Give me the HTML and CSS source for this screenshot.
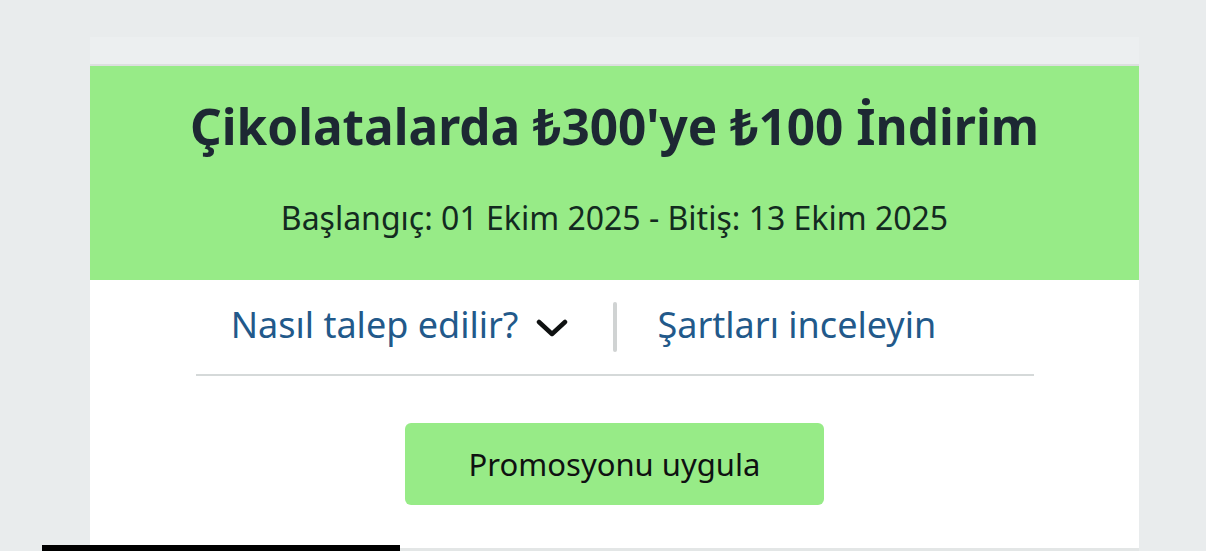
FILE: index.html
```html
<!DOCTYPE html>
<html lang="tr">
<head>
<meta charset="utf-8">
<link rel="stylesheet" href="styles.css">
</head>
<body>
<div class="page">
  <div class="card">
    <div class="card-top"></div>
    <div class="promo-head">
      <h1 class="title">Çikolatalarda ₺300'ye ₺100 İndirim</h1>
      <p class="dates">Başlangıç: 01 Ekim 2025 - Bitiş: 13 Ekim 2025</p>
    </div>
    <div class="promo-body">
      <div class="links">
        <a class="link how">Nasıl talep edilir?
          <svg class="chev" width="32" height="18" viewBox="0 0 32 18"><path d="M3 3 L16 15 L29 3" fill="none" stroke="#0f1111" stroke-width="4.5" stroke-linecap="round" stroke-linejoin="round"/></svg>
        </a>
        <span class="vsep"></span>
        <a class="link terms">Şartları inceleyin</a>
      </div>
      <div class="btn-row">
        <button class="apply">Promosyonu uygula</button>
      </div>
    </div>
  </div>
  <div class="bottom-bar"></div>
</div>
</body>
</html>
```
FILE: styles.css
```css
html, body {
  margin: 0;
  padding: 0;
  background: #e9eced;
  height: 551px;
  overflow: hidden;
}
.page {
  position: relative;
  height: 551px;
  padding-top: 37px;
  box-sizing: border-box;
  font-family: "Noto Sans", "Open Sans", sans-serif;
}
.card {
  margin-left: 90px;
  width: 1049px;
  background: #ffffff;
  height: 511px;
  border-bottom: 3px solid #e3e6e6;
}
.card-top {
  height: 27px;
  background: #eceff0;
  border-bottom: 2px solid #dcdfdf;
}
.promo-head {
  background: #97eb87;
  height: 214px;
  display: flex;
  flex-direction: column;
  align-items: center;
  box-sizing: border-box;
  padding-top: 28px;
}
.title {
  margin: 0;
  font-size: 49.5px;
  font-weight: 700;
  color: #1d2833;
  line-height: 64px;
}
.dates {
  margin: 38px 0 0;
  font-size: 32px;
  color: #132a1f;
  line-height: 44px;
}
.promo-body {
  display: flex;
  flex-direction: column;
  align-items: center;
}
.links {
  width: 838px;
  height: 96px;
  box-sizing: border-box;
  border-bottom: 2px solid #d5d9d9;
  display: grid;
  grid-template-columns: 1fr auto 1fr;
  align-items: start;
  padding-top: 20px;
}
.link {
  color: #22598a;
  font-size: 36px;
  line-height: 50px;
  display: flex;
  align-items: center;
  white-space: nowrap;
}
.how {
  justify-self: end;
  margin-right: 45px;
}
.terms {
  justify-self: start;
  margin-left: 41px;
}
.chev {
  margin-left: 17px;
  margin-top: 6px;
}
.vsep {
  width: 4px;
  height: 50px;
  background: #d0d3d3;
  border-radius: 2px;
  margin-top: 2px;
}
.btn-row {
  padding-top: 47px;
}
.apply {
  width: 419px;
  height: 82px;
  background: #97eb87;
  border: none;
  border-radius: 6px;
  font-family: "Noto Sans", "Open Sans", sans-serif;
  font-size: 31px;
  color: #0f1111;
  padding: 0;
}
.bottom-bar {
  position: absolute;
  left: 42px;
  top: 545px;
  width: 358px;
  height: 6px;
  background: #000;
}
```
